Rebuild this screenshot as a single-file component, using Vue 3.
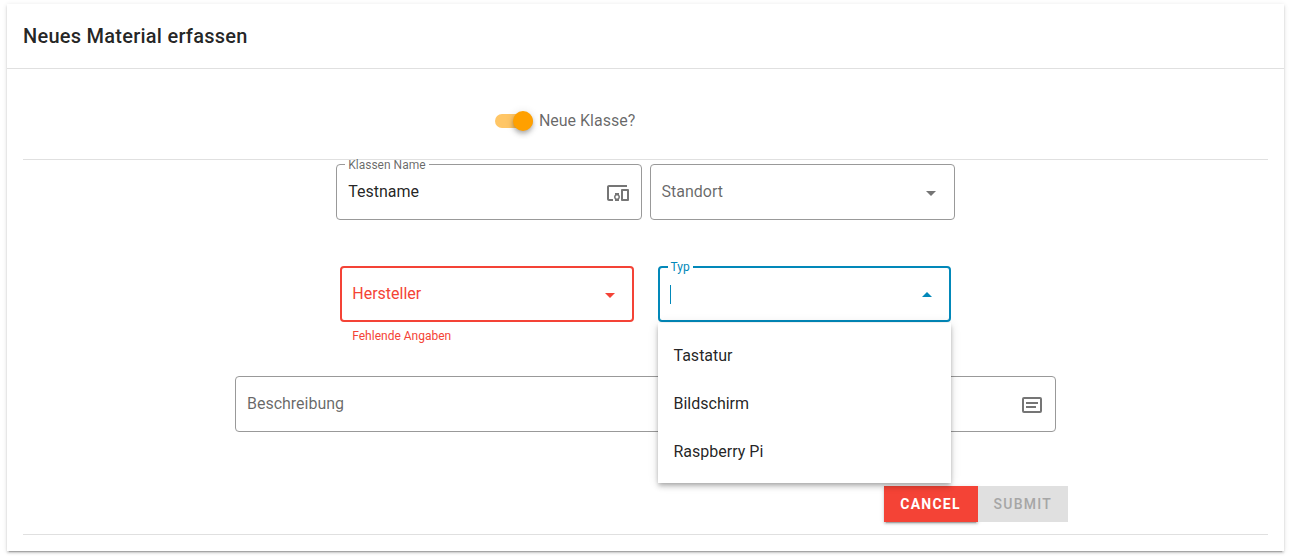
<script setup>
import { ref } from 'vue'

const newClass = ref(true)
const className = ref('Testname')
const location = ref('')
const maker = ref('')
const type = ref('')
const description = ref('')
const types = ['Tastatur', 'Bildschirm', 'Raspberry Pi']
</script>

<template>
  <main class="page">
    <form class="card" @submit.prevent>
      <header class="card-header">
        <h1>Neues Material erfassen</h1>
      </header>

      <div class="body">
        <section class="band">
          <div class="switch">
            <input id="new-class" v-model="newClass" type="checkbox" role="switch">
            <label for="new-class">Neue Klasse?</label>
          </div>
        </section>
        <hr>

        <section class="band">
          <div class="pair tight">
            <div class="field">
              <label class="floating" for="class-name">Klassen Name</label>
              <input id="class-name" v-model="className" type="text">
              <svg class="icon" viewBox="0 0 24 24" aria-hidden="true"><path d="M3 6h18V4H3c-1.100 0-2 .9-2 2v12c0 1.100.9 2 2 2h4v-2H3V6zm10 6H9v1.780c-.61.55-1 1.330-1 2.220s.39 1.670 1 2.220V20h4v-1.780c.61-.55 1-1.340 1-2.220s-.39-1.670-1-2.220V12zm-2 5.500c-.83 0-1.500-.67-1.500-1.500s.67-1.500 1.500-1.500 1.500.67 1.500 1.500-.67 1.500-1.500 1.500zM22 8h-6c-.5 0-1 .5-1 1v10c0 .5.5 1 1 1h6c.5 0 1-.5 1-1V9c0-.5-.5-1-1-1zm-1 10h-4v-8h4v8z" /></svg>
            </div>
            <div class="field">
              <label class="resting" for="location">Standort</label>
              <select id="location" v-model="location"><option value="" /></select>
              <svg class="icon" viewBox="0 0 24 24" aria-hidden="true"><path d="M7 10l5 5 5-5z" /></svg>
            </div>
          </div>

          <div class="pair wide">
            <div>
              <div class="field error">
                <label class="resting" for="maker">Hersteller</label>
                <select id="maker" v-model="maker" aria-invalid="true" aria-describedby="maker-error"><option value="" /></select>
                <svg class="icon" viewBox="0 0 24 24" aria-hidden="true"><path d="M7 10l5 5 5-5z" /></svg>
              </div>
              <p id="maker-error" class="message">Fehlende Angaben</p>
            </div>
            <div class="field active">
              <label class="floating" for="type">Typ</label>
              <input id="type" v-model="type" type="text" role="combobox" aria-expanded="true" aria-controls="type-list">
              <span class="caret" />
              <svg class="icon flipped" viewBox="0 0 24 24" aria-hidden="true"><path d="M7 10l5 5 5-5z" /></svg>
              <ul id="type-list" class="menu" role="listbox" aria-label="Typ">
                <li v-for="item in types" :key="item" role="option" @click="type = item">{{ item }}</li>
              </ul>
            </div>
          </div>

          <div class="details">
            <div class="field">
              <label class="resting" for="description">Beschreibung</label>
              <input id="description" v-model="description" type="text">
              <svg class="icon" viewBox="0 0 24 24" aria-hidden="true"><path d="M20 20H4a2 2 0 0 1-2-2V6a2 2 0 0 1 2-2h16a2 2 0 0 1 2 2v12a2 2 0 0 1-2 2M4 6v12h16V6H4m2 3h12v2H6V9m0 4h10v2H6v-2z" /></svg>
            </div>
          </div>

          <div class="actions">
            <button type="button" class="cancel">CANCEL</button>
            <button type="submit" class="submit" disabled>SUBMIT</button>
          </div>
        </section>
        <hr>
      </div>
    </form>
  </main>
</template>

<style>
body {
  margin: 0;
  background: #fff;
}
</style>

<style scoped>
* {
  box-sizing: border-box;
}

.page {
  padding: 4px 7px 5px;
  font: 400 16px/24px Roboto, "Liberation Sans", sans-serif;
  color: rgba(0, 0, 0, 0.87);
}

.card {
  background: #fff;
  box-shadow: 0 3px 1px -2px rgba(0, 0, 0, 0.2), 0 2px 2px 0 rgba(0, 0, 0, 0.14), 0 1px 5px 0 rgba(0, 0, 0, 0.12);
}

.card-header {
  padding: 16px;
  border-bottom: 1px solid #e0e0e0;
}

h1 {
  margin: 0;
  font-size: 20px;
  font-weight: 500;
  line-height: 32px;
  letter-spacing: 0.0125em;
}

.body {
  padding: 0 16px 16px;
}

hr {
  height: 1px;
  margin: 0;
  border: 0;
  background: #e0e0e0;
}

.band {
  margin: 0 -12px;
}

.switch {
  display: flex;
  align-items: center;
  gap: 6px;
  width: 25%;
  margin: 0 auto;
  padding: 40px 8px 26px;
  color: rgba(0, 0, 0, 0.6);
}

.switch input {
  appearance: none;
  display: flex;
  align-items: center;
  width: 38px;
  height: 14px;
  margin: 0;
  border-radius: 8px;
  background: #ffc666;
}

.switch input::before {
  content: "";
  width: 20px;
  height: 20px;
  border-radius: 50%;
  background: #ffa000;
  box-shadow: 0 2px 4px -1px rgba(0, 0, 0, 0.2), 0 4px 5px 0 rgba(0, 0, 0, 0.14), 0 1px 10px 0 rgba(0, 0, 0, 0.12);
}

.switch input:checked::before {
  margin-left: auto;
}

.pair {
  display: grid;
  grid-template-columns: 1fr 1fr;
  width: 50%;
  margin: 0 auto;
}

.tight {
  gap: 8px;
  padding: 4px 8px 46px;
}

.wide {
  gap: 24px;
  padding: 0 12px;
}

.field {
  position: relative;
  display: flex;
  align-items: center;
  height: 56px;
  padding: 0 11px;
  border: 1px solid #999;
  border-radius: 4px;
}

.field input,
.field select {
  appearance: none;
  flex: 1;
  min-width: 0;
  height: 32px;
  margin: 0;
  padding: 0;
  border: 0;
  outline: 0;
  background: transparent;
  color: inherit;
  font: inherit;
}

.field input {
  padding-bottom: 2px;
}

.resting {
  position: absolute;
  left: 11px;
  top: 15px;
  color: rgba(0, 0, 0, 0.6);
  pointer-events: none;
}

.floating {
  position: absolute;
  left: 8px;
  top: -4px;
  padding: 0 3px;
  background: #fff;
  color: rgba(0, 0, 0, 0.6);
  font-size: 12px;
  line-height: 8px;
}

.icon {
  position: relative;
  top: 1px;
  width: 24px;
  height: 24px;
  fill: #757575;
}

.flipped {
  transform: rotate(180deg);
}

.error,
.active {
  border-width: 2px;
  padding: 0 10px;
}

.error .resting {
  left: 10px;
  top: 14px;
}

.error {
  border-color: #f44336;
}

.error .resting,
.message {
  color: #f44336;
}

.error .icon {
  fill: #f44336;
}

.message {
  margin: 8px 12px 0;
  font-size: 12px;
  line-height: 12px;
}

.active {
  border-color: #0288b9;
}

.active .floating {
  color: #0288b9;
  top: -5px;
}

.active .icon {
  fill: #0288b9;
}

.caret {
  position: absolute;
  left: 10px;
  top: 17px;
  width: 1px;
  height: 19px;
  background: #0288b9;
}

.menu {
  position: absolute;
  z-index: 1;
  top: 55px;
  left: -2px;
  right: -2px;
  margin: 0;
  padding: 9px 0 7px;
  list-style: none;
  background: #fff;
  box-shadow: 0 2px 4px -1px rgba(0, 0, 0, 0.2), 0 4px 5px 0 rgba(0, 0, 0, 0.14), 0 1px 10px 0 rgba(0, 0, 0, 0.12);
}

.menu li {
  padding: 12px 16px;
}

.details,
.actions {
  width: 66.6%;
  margin: 0 auto;
}

.details {
  padding: 34px 12px 54px;
}

.actions {
  display: flex;
  justify-content: flex-end;
  padding-bottom: 12px;
}

button {
  height: 36px;
  padding: 0 16px;
  border: 0;
  font: 500 14px/20px Roboto, "Liberation Sans", sans-serif;
  letter-spacing: 0.0892857em;
}

.cancel {
  min-width: 94px;
  background: #f44336;
  color: #fff;
  font-weight: 700;
  box-shadow: 0 3px 1px -2px rgba(0, 0, 0, 0.2), 0 2px 2px 0 rgba(0, 0, 0, 0.14), 0 1px 5px 0 rgba(0, 0, 0, 0.12);
}

.submit {
  position: relative;
  background: #e0e0e0;
  color: #a6a6a6;
}
</style>
